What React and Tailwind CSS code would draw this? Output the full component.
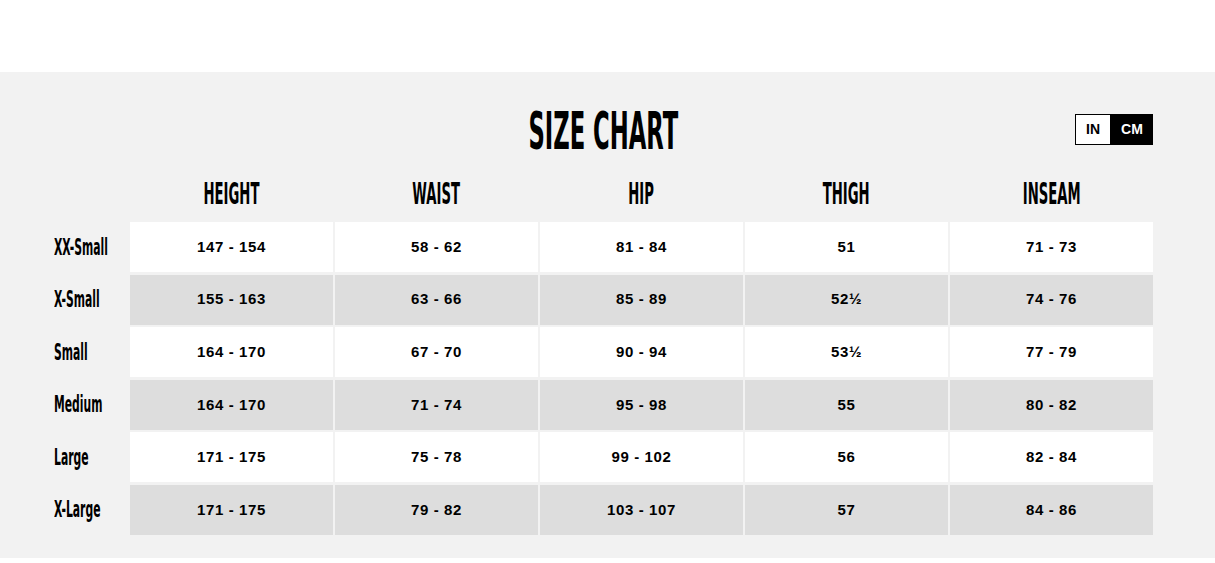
import React from "react";

const cond = { fontFamily: '"DejaVu Sans", sans-serif' };

const rows = [
  { name: "XX-Small", vals: ["147 - 154", "58 - 62", "81 - 84", "51", "71 - 73"] },
  { name: "X-Small", vals: ["155 - 163", "63 - 66", "85 - 89", "52½", "74 - 76"] },
  { name: "Small", vals: ["164 - 170", "67 - 70", "90 - 94", "53½", "77 - 79"] },
  { name: "Medium", vals: ["164 - 170", "71 - 74", "95 - 98", "55", "80 - 82"] },
  { name: "Large", vals: ["171 - 175", "75 - 78", "99 - 102", "56", "82 - 84"] },
  { name: "X-Large", vals: ["171 - 175", "79 - 82", "103 - 107", "57", "84 - 86"] },
];

const heads = ["HEIGHT", "WAIST", "HIP", "THIGH", "INSEAM"];

const App = () => {
  return (
    <div className="w-[1215px] h-[563px] bg-white overflow-hidden">
      <div className="h-[72px]" />
      {/* size chart section */}
      <section className="bg-[#f2f2f2] h-[486px] pl-[54px] pr-[62px]">
        <div className="relative h-[89px] flex items-end justify-center">
          <h1
            style={cond}
            className="text-[51px] leading-none font-bold text-black scale-x-[0.445] whitespace-nowrap mb-[4px]"
          >
            SIZE CHART
          </h1>
          {/* unit toggle */}
          <div
            className="absolute right-0 top-[42px] flex h-[31px] text-[14px] font-bold"
            style={{ fontFamily: '"Liberation Sans", sans-serif' }}
          >
            <div className="w-[36px] border border-black bg-white flex items-center justify-center text-black">
              IN
            </div>
            <div className="w-[42px] bg-black flex items-center justify-center text-white">
              CM
            </div>
          </div>
        </div>

        {/* column headers */}
        <div className="flex h-[61px] items-center pt-[4px]">
          <div className="w-[76px]" />
          <div className="flex-1 grid grid-cols-5 gap-[2px]">
            {heads.map((h) => (
              <div key={h} className="flex justify-center">
                <span
                  style={cond}
                  className="text-[30px] leading-none font-bold text-black scale-x-[0.44] whitespace-nowrap"
                >
                  {h}
                </span>
              </div>
            ))}
          </div>
        </div>

        {/* rows */}
        <div className="flex flex-col gap-[2.6px]">
          {rows.map((r, i) => (
            <div key={r.name} className="flex h-[50px]">
              <div className="w-[76px] flex items-center">
                <span
                  style={cond}
                  className="text-[23px] leading-none font-bold text-black scale-x-[0.47] origin-left whitespace-nowrap"
                >
                  {r.name}
                </span>
              </div>
              <div className="flex-1 grid grid-cols-5 gap-[2px]">
                {r.vals.map((v, j) => (
                  <div
                    key={j}
                    className={
                      "flex items-center justify-center text-[15px] font-bold tracking-[0.6px] text-black " +
                      (i % 2 === 0 ? "bg-white" : "bg-[#dddddd]")
                    }
                    style={{ fontFamily: '"Liberation Sans", sans-serif' }}
                  >
                    {v}
                  </div>
                ))}
              </div>
            </div>
          ))}
        </div>
      </section>
    </div>
  );
};

export default App;
